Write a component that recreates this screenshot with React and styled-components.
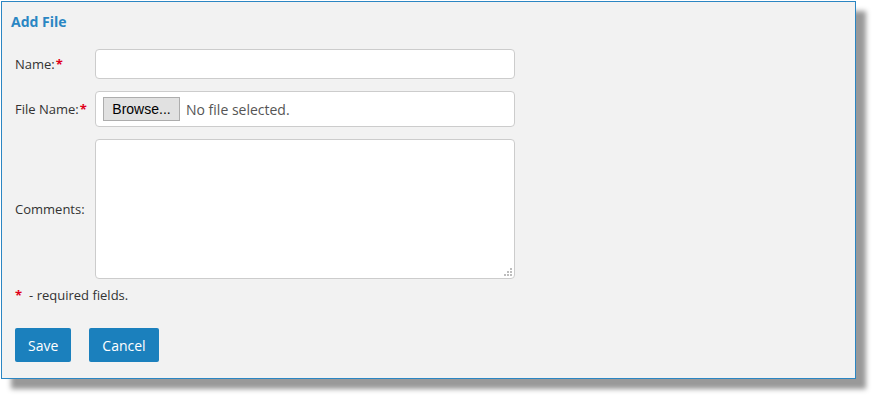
import React from 'react'
import styled, { createGlobalStyle } from 'styled-components'

const GlobalStyle = createGlobalStyle`
  html, body {
    margin: 0;
    padding: 0;
    background: #ffffff;
  }
  body {
    font-family: "Open Sans", "Liberation Sans", sans-serif;
    color: #333333;
  }
`

const Page = styled.div`
  box-sizing: border-box;
  width: 882px;
  height: 405px;
  padding: 1px 0 0 1px;
  background: #ffffff;
`

const Panel = styled.div`
  box-sizing: border-box;
  width: 855px;
  height: 378px;
  background: #f2f2f2;
  border: 1px solid #2b86c3;
  box-shadow: 10px 10px 5px #999999;
`

const Title = styled.h2`
  margin: 0;
  padding: 10px 0 0 9px;
  height: 36px;
  box-sizing: border-box;
  font-size: 14px;
  font-weight: 700;
  color: #2a86c3;
`

const Form = styled.form`
  display: grid;
  grid-template-columns: 80px 420px;
  row-gap: 12px;
  padding: 11px 0 0 13px;
`

const Label = styled.label`
  display: flex;
  align-items: center;
  font-size: 13px;
  color: #333333;
`

const Req = styled.span`
  color: #e0001b;
  font-weight: 700;
  margin-left: 1px;
`

const Field = styled.div`
  box-sizing: border-box;
  height: ${p => p.$h}px;
  background: #ffffff;
  border: 1px solid #cccccc;
  border-radius: 4px;
  display: flex;
  align-items: center;
  padding-left: 7px;
`

const AreaWrap = styled.div`
  position: relative;
  width: 420px;
  height: 140px;
`

const TextArea = styled.textarea`
  box-sizing: border-box;
  display: block;
  width: 420px;
  height: 140px;
  background: #ffffff;
  border: 1px solid #cccccc;
  border-radius: 4px;
  resize: none;
  outline: none;
  font-family: inherit;
`

const Grip = styled.svg`
  position: absolute;
  right: 3px;
  bottom: 3px;
  pointer-events: none;
`

const BrowseButton = styled.button`
  box-sizing: border-box;
  height: 24px;
  width: 77px;
  padding: 0;
  background: #e1e1e1;
  border: 1px solid #adadad;
  font-family: "Liberation Sans", Arial, sans-serif;
  font-size: 14px;
  color: #000000;
`

const FileText = styled.span`
  margin-left: 6px;
  font-size: 14px;
  color: #555555;
`

const Note = styled.div`
  padding: 7px 0 0 13px;
  font-size: 13px;
  color: #333333;
  height: 21px;
`

const NoteStar = styled.span`
  color: #e0001b;
  font-weight: 700;
  margin-right: 7px;
`

const Actions = styled.div`
  display: flex;
  gap: 18px;
  padding: 21px 0 0 13px;
`

const Button = styled.button`
  box-sizing: border-box;
  height: 34px;
  padding: 0 13px;
  background: #1b80bd;
  border: none;
  border-radius: 2px;
  color: #ffffff;
  font-family: "Open Sans", sans-serif;
  font-size: 14px;
`

export default function App() {
  return (
    <>
      <GlobalStyle />
      <Page>
        <Panel>
          <Title>Add File</Title>
          <Form onSubmit={e => e.preventDefault()}>
            <Label>Name:<Req>*</Req></Label>
            <Field $h={30} />
            <Label>File Name:<Req>*</Req></Label>
            <Field $h={36}>
              <BrowseButton type="button">Browse...</BrowseButton>
              <FileText>No file selected.</FileText>
            </Field>
            <Label>Comments:</Label>
            <AreaWrap>
              <TextArea />
              <Grip width="8" height="8" viewBox="0 0 8 8">
                <g fill="#bdbdbd">
                  <rect x="6" y="0" width="2" height="2" />
                  <rect x="3" y="3" width="2" height="2" />
                  <rect x="6" y="3" width="2" height="2" />
                  <rect x="0" y="6" width="2" height="2" />
                  <rect x="3" y="6" width="2" height="2" />
                  <rect x="6" y="6" width="2" height="2" />
                </g>
              </Grip>
            </AreaWrap>
          </Form>
          <Note><NoteStar>*</NoteStar>- required fields.</Note>
          <Actions>
            <Button type="button">Save</Button>
            <Button type="button">Cancel</Button>
          </Actions>
        </Panel>
      </Page>
    </>
  )
}
